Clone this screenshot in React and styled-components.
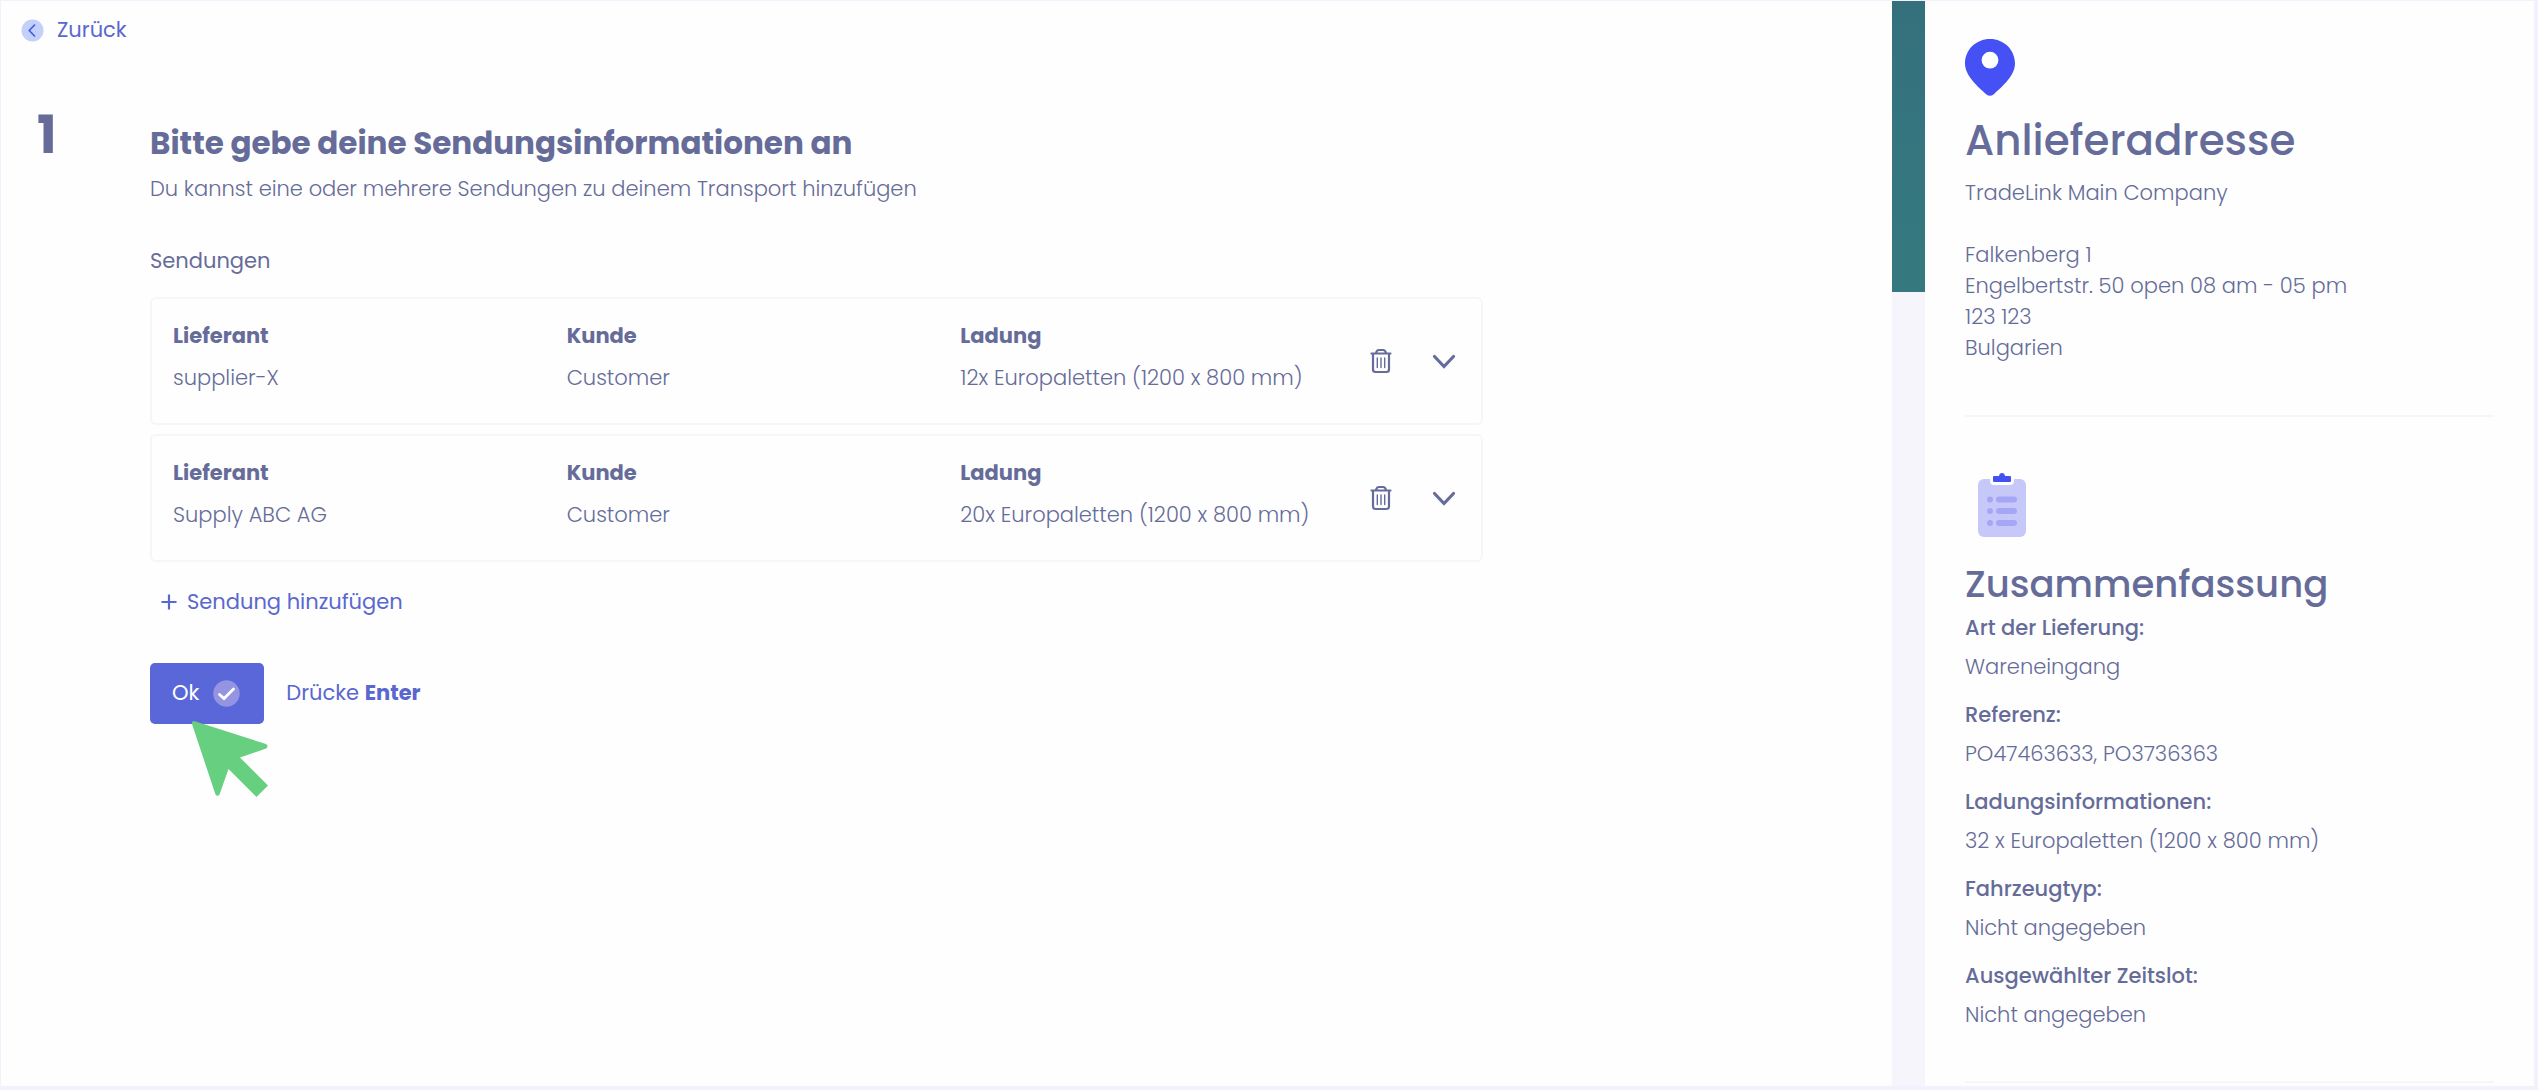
import styled, { createGlobalStyle } from "styled-components";

const GlobalStyle = createGlobalStyle`
  * {
    box-sizing: border-box;
  }
  body {
    margin: 0;
    background: #f1f2fe;
    color: #666c99;
    font-family: Poppins, Inter, "Open Sans", sans-serif;
    font-feature-settings: "calt" 0;
    font-size: 21px;
    line-height: 32px;
    font-weight: 300;
  }
  h1,
  h2,
  p,
  dl,
  dd,
  address {
    margin: 0;
    font-style: normal;
  }
  svg {
    display: block;
    flex-shrink: 0;
  }
  button {
    font: inherit;
    color: inherit;
    background: none;
    border: none;
    padding: 0;
    cursor: pointer;
  }
`;

const Page = styled.div`
  display: flex;
  min-height: 100vh;
  padding: 1px 4px 4px 1px;
`;

const Main = styled.main`
  flex: 1;
  background: #fefefe;
  padding: 13px 20px;
`;

const BackLink = styled.a`
  display: inline-flex;
  align-items: center;
  gap: 13px;
  color: #5a67d0;
  font-weight: 400;
  text-decoration: none;
`;

const Step = styled.section`
  display: flex;
  margin-top: 58px;
  padding-left: 16px;
`;

const StepNumber = styled.div`
  flex: 0 0 113px;
  font-size: 52px;
  line-height: 52px;
  font-weight: 700;
`;

const StepBody = styled.div`
  flex: 1;
  max-width: 1333px;
`;

const Title = styled.h1`
  margin: 12px 0 8px;
  font-size: 31px;
  line-height: 44px;
  font-weight: 700;
`;

const Label = styled.p`
  margin: 40px 0 20px;
  font-weight: 400;
`;

const Card = styled.article`
  display: flex;
  align-items: center;
  gap: 16px;
  margin-bottom: 9px;
  padding: 21px 25px 29px 21px;
  border: 2px solid #f6f6f8;
  border-radius: 6px;
`;

const Fields = styled.dl`
  flex: 1;
  display: grid;
  grid-template-columns: repeat(3, 1fr);
`;

const FieldName = styled.dt`
  margin-bottom: 10px;
  font-weight: 700;
`;

const Actions = styled.div`
  display: flex;
  align-items: center;
  gap: 40px;
  padding-top: 8px;
`;

const AddButton = styled.button`
  display: flex;
  align-items: center;
  gap: 9px;
  margin: 24px 0 45px 10px;
  color: #5a67d0;
  font-weight: 400;
`;

const Confirm = styled.div`
  display: flex;
  align-items: center;
  gap: 22px;
  color: #5a67d0;
  font-weight: 400;

  b {
    font-weight: 700;
  }
`;

const ButtonWrap = styled.div`
  position: relative;
`;

const OkButton = styled.button`
  display: flex;
  align-items: center;
  gap: 14px;
  height: 61px;
  padding: 0 24px 0 22px;
  border-radius: 5px;
  background: #5a67d8;
  color: #fff;
`;

const Pointer = styled.svg`
  position: absolute;
  top: 57px;
  left: 41px;
`;

const Strip = styled.div`
  width: 33px;
  background: #f6f5fc;
`;

const Photo = styled.div`
  height: 291px;
  background: linear-gradient(#34707c, #35757f 40%, #35797e);
`;

const Aside = styled.aside`
  width: 609px;
  background: #fefefe;
  padding: 0 40px;
`;

const Panel = styled.section`
  padding: ${(props) => props.$padding};
  border-bottom: 2px solid #f6f6f9;
`;

const PanelTitle = styled.h2`
  margin-top: 17px;
  font-size: ${(props) => (props.$large ? "42px" : "37px")};
  line-height: 56px;
  font-weight: 500;
`;

const Company = styled.p`
  margin: 8px 0 30px;
`;

const Address = styled.address`
  line-height: 31px;
`;

const Summary = styled.dl`
  dt {
    font-weight: 500;
  }
  dd {
    margin: 7px 0 16px;
  }
`;

const BackIcon = () => (
  <svg width="23" height="23" viewBox="0 0 23 23" fill="none">
    <circle cx="11.5" cy="11.5" r="11" fill="#c3d0fa" />
    <path d="M14 5.5L8.3 11.5L14 17.5" stroke="#4a5ae0" strokeWidth="1.7" />
  </svg>
);

const TrashIcon = () => (
  <svg
    width="22"
    height="26"
    viewBox="0 0 22 26"
    fill="none"
    stroke="#666c99"
    strokeWidth="2.2"
    strokeLinecap="round"
    strokeLinejoin="round"
  >
    <path d="M1.5 5.5H20.5M6 5C6.5 2.8 7.6 2 9 2H13C14.4 2 15.5 2.8 16 5" />
    <path d="M3 6V21.5C3 23.2 3.8 24 5.5 24H16.5C18.2 24 19 23.2 19 21.5V6" />
    <path d="M7.3 10V19.5M11 10V19.5M14.7 10V19.5" strokeWidth="1.4" />
  </svg>
);

const ChevronIcon = () => (
  <svg width="24" height="24" viewBox="0 0 24 24" fill="none">
    <path
      d="M2.5 7.5L12 17.5L21.5 7.5"
      stroke="#666c99"
      strokeWidth="3.2"
      strokeLinecap="round"
    />
  </svg>
);

const PlusIcon = () => (
  <svg width="18" height="18" viewBox="0 0 18 18">
    <path d="M9 1.5V16.5M1.5 9H16.5" stroke="#5a67d0" strokeWidth="2.2" />
  </svg>
);

const CheckIcon = () => (
  <svg width="27" height="27" viewBox="0 0 27 27" fill="none">
    <circle cx="13.5" cy="13.5" r="13.2" fill="#9494e3" />
    <path
      d="M6.5 14.5L11 18.5L20.5 9"
      stroke="#fff"
      strokeWidth="2.8"
      strokeLinecap="round"
    />
  </svg>
);

const PinIcon = () => (
  <svg width="50" height="57" viewBox="0 0 50 57">
    <path
      d="M25 0C11 0 0 10.8 0 24.5C0 36.5 12.5 47.5 21.5 55.4Q25 58.2 28.5 55.4C37.5 47.5 50 36.5 50 24.5C50 10.8 39 0 25 0ZM25 12.8A8.4 8.4 0 1 1 25 29.6A8.4 8.4 0 1 1 25 12.8Z"
      fill="#4550f5"
    />
  </svg>
);

const ClipboardIcon = () => (
  <svg width="74" height="66" viewBox="0 0 74 66">
    <rect x="13" y="6" width="48" height="58" rx="6" fill="#c6c8fa" />
    <rect x="25" y="1" width="24" height="11" rx="4" fill="#fefefe" />
    <path
      d="M29 3H34Q34.5 0 37 0Q39.5 0 40 3H45Q46 3 46 4V8Q46 9 45 9H29Q28 9 28 8V4Q28 3 29 3Z"
      fill="#4550f0"
    />
    <g fill="#a5a6f6">
      <circle cx="25" cy="26.5" r="3" />
      <circle cx="25" cy="38" r="3" />
      <circle cx="25" cy="50" r="3" />
      <rect x="31" y="23.5" width="21" height="6" rx="3" />
      <rect x="31" y="35" width="21" height="6" rx="3" />
      <rect x="31" y="47" width="21" height="6" rx="3" />
    </g>
  </svg>
);

const shipments = [
  {
    supplier: "supplier-X",
    customer: "Customer",
    load: "12x Europaletten (1200 x 800 mm)",
  },
  {
    supplier: "Supply ABC AG",
    customer: "Customer",
    load: "20x Europaletten (1200 x 800 mm)",
  },
];

const summary = [
  ["Art der Lieferung:", "Wareneingang"],
  ["Referenz:", "PO47463633, PO3736363"],
  ["Ladungsinformationen:", "32 x Europaletten (1200 x 800 mm)"],
  ["Fahrzeugtyp:", "Nicht angegeben"],
  ["Ausgewählter Zeitslot:", "Nicht angegeben"],
];

const Shipment = ({ supplier, customer, load }) => (
  <Card>
    <Fields>
      <div>
        <FieldName>Lieferant</FieldName>
        <dd>{supplier}</dd>
      </div>
      <div>
        <FieldName>Kunde</FieldName>
        <dd>{customer}</dd>
      </div>
      <div>
        <FieldName>Ladung</FieldName>
        <dd>{load}</dd>
      </div>
    </Fields>
    <Actions>
      <button aria-label="Löschen">
        <TrashIcon />
      </button>
      <button aria-label="Aufklappen">
        <ChevronIcon />
      </button>
    </Actions>
  </Card>
);

const App = () => {
  return (
    <Page>
      <GlobalStyle />
      <Main>
        <BackLink href="#">
          <BackIcon />
          Zurück
        </BackLink>
        <Step>
          <StepNumber>1</StepNumber>
          <StepBody>
            <Title>Bitte gebe deine Sendungsinformationen an</Title>
            <p>
              Du kannst eine oder mehrere Sendungen zu deinem Transport
              hinzufügen
            </p>
            <Label>Sendungen</Label>
            {shipments.map((item) => (
              <Shipment key={item.supplier} {...item} />
            ))}
            <AddButton>
              <PlusIcon />
              Sendung hinzufügen
            </AddButton>
            <Confirm>
              <ButtonWrap>
                <OkButton>
                  Ok
                  <CheckIcon />
                </OkButton>
                <Pointer width="78" height="78" viewBox="0 0 78 78">
                  <path
                    d="M3 1L75 24Q78 26 75 28.5L49 37.5L77 65.5L65.5 77L37.5 49L28.5 74.5Q26.5 77 24.5 74.5L1 4Q0.5 1 3 1Z"
                    fill="#66cf80"
                  />
                </Pointer>
              </ButtonWrap>
              <span>
                Drücke <b>Enter</b>
              </span>
            </Confirm>
          </StepBody>
        </Step>
      </Main>
      <Strip>
        <Photo />
      </Strip>
      <Aside>
        <Panel $padding="38px 0 52px">
          <PinIcon />
          <PanelTitle $large>Anlieferadresse</PanelTitle>
          <Company>TradeLink Main Company</Company>
          <Address>
            Falkenberg 1
            <br />
            Engelbertstr. 50 open 08 am - 05 pm
            <br />
            123 123
            <br />
            Bulgarien
          </Address>
        </Panel>
        <Panel $padding="56px 0 34px">
          <ClipboardIcon />
          <PanelTitle>Zusammenfassung</PanelTitle>
          <Summary>
            {summary.map(([name, value]) => (
              <div key={name}>
                <dt>{name}</dt>
                <dd>{value}</dd>
              </div>
            ))}
          </Summary>
        </Panel>
      </Aside>
    </Page>
  );
};

export default App;
